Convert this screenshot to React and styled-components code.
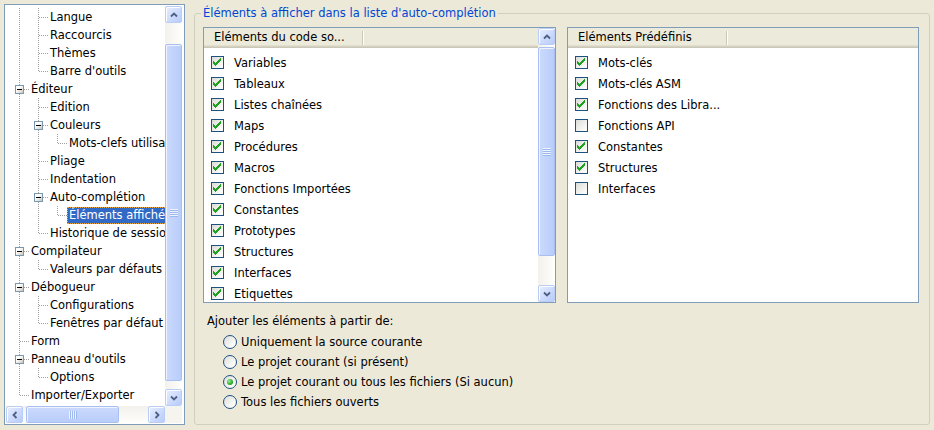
import React from 'react';
import styled, { createGlobalStyle } from 'styled-components';

const FONT = '"DejaVu Sans", "Liberation Sans", sans-serif';
const DOT = '#a0a0a0';

const GlobalStyle = createGlobalStyle`
  html, body {
    margin: 0;
    padding: 0;
    background: #ece9d8;
  }
  body {
    font-family: ${FONT};
    font-size: 11.5px;
    color: #000;
  }
`;

const Window = styled.div`
  display: flex;
  gap: 9px;
  width: 934px;
  height: 430px;
  box-sizing: border-box;
  padding: 4px 5px 0 4px;
`;

/* ---------- scrollbars ---------- */

const VBar = styled.div`
  display: flex;
  flex-direction: column;
  min-height: 0;
  background: linear-gradient(to right, #f3f1ec, #fefefb);
`;

const HBar = styled.div`
  display: flex;
  min-width: 0;
  background: linear-gradient(to bottom, #f3f1ec, #fefefb);
`;

const Corner = styled.div`
  background: #f5f4ef;
`;

const ScrollButton = styled.div`
  flex: 0 0 17px;
  width: 17px;
  height: 17px;
  box-sizing: border-box;
  display: flex;
  align-items: center;
  justify-content: center;
  border: 1px solid #b9cdf7;
  border-radius: 2px;
  background: linear-gradient(135deg, #e7eefd 0%, #ccdafc 55%, #b8ccf9 100%);
  box-shadow: inset 1px 1px 0 #fbfcff;
`;

const Thumb = styled.div`
  flex: 0 0 ${(p) => p.$size}px;
  box-sizing: border-box;
  display: flex;
  align-items: center;
  justify-content: center;
  border: 1px solid #a9bff2;
  border-radius: 2px;
  box-shadow: inset 1px 1px 0 #eef3fe;
  background: linear-gradient(${(p) => (p.$horizontal ? 'to bottom' : 'to right')}, #cbdafd, #b9cdfa);
  ${(p) => (p.$horizontal ? `margin-left: ${p.$offset}px;` : `margin-top: ${p.$offset}px;`)}
`;

const Track = styled.div`
  flex: 1;
`;

const Chevron = ({ dir }) => {
  const pts = {
    up: '1,5.5 4,2.5 7,5.5',
    down: '1,2.5 4,5.5 7,2.5',
    left: '5.5,1 2.5,4 5.5,7',
    right: '2.5,1 5.5,4 2.5,7',
  }[dir];
  return (
    <svg width="8" height="8" viewBox="0 0 8 8">
      <polyline points={pts} fill="none" stroke="#4d6185" strokeWidth="1.8" />
    </svg>
  );
};

const Grip = ({ horizontal }) => (
  <svg width="8" height="8" viewBox="0 0 8 8">
    {[0, 2, 4, 6].map((i) =>
      horizontal ? (
        <g key={i}>
          <rect x={i} y="0" width="1" height="8" fill="#eef3fe" />
          <rect x={i + 1} y="0" width="1" height="8" fill="#9db7ef" />
        </g>
      ) : (
        <g key={i}>
          <rect x="0" y={i} width="8" height="1" fill="#eef3fe" />
          <rect x="0" y={i + 1} width="8" height="1" fill="#9db7ef" />
        </g>
      ),
    )}
  </svg>
);

const VScroll = ({ offset, size }) => (
  <VBar>
    <ScrollButton><Chevron dir="up" /></ScrollButton>
    <Thumb $offset={offset} $size={size}><Grip /></Thumb>
    <Track />
    <ScrollButton><Chevron dir="down" /></ScrollButton>
  </VBar>
);

const HScroll = ({ offset, size }) => (
  <HBar>
    <ScrollButton><Chevron dir="left" /></ScrollButton>
    <Thumb $horizontal $offset={offset} $size={size}><Grip horizontal /></Thumb>
    <Track />
    <ScrollButton><Chevron dir="right" /></ScrollButton>
  </HBar>
);

/* ---------- tree ---------- */

const TreePanel = styled.div`
  flex: 0 0 181px;
  height: 421px;
  box-sizing: border-box;
  border: 1px solid #7f9db9;
  padding: 1px 2px 1px 1px;
  background: #fff;
  display: grid;
  grid-template-columns: minmax(0, 1fr) 17px;
  grid-template-rows: minmax(0, 1fr) 17px;
`;

const TreeView = styled.div`
  overflow: hidden;
  padding: 2px 0 0 4px;
`;

const TreeRow = styled.div`
  display: flex;
  align-items: center;
  height: 18px;
  white-space: nowrap;
`;

const vLine = (h) =>
  `repeating-linear-gradient(${DOT} 0 1px, transparent 1px 2px) 9px 0 / 1px ${h}px no-repeat`;
const hLine = `repeating-linear-gradient(to right, ${DOT} 0 1px, transparent 1px 2px) 10px 9px / 9px 1px no-repeat`;

const Cell = styled.span`
  flex: 0 0 19px;
  height: 18px;
  display: flex;
  align-items: center;
  justify-content: center;
  background: ${(p) => {
    if (p.$kind === 'pass') return vLine(18);
    if (p.$kind === 'tee') return `${hLine}, ${vLine(18)}`;
    if (p.$kind === 'end') return `${hLine}, ${vLine(10)}`;
    return 'none';
  }};
`;

const ExpandBox = styled.span`
  width: 9px;
  height: 9px;
  box-sizing: border-box;
  margin-top: 1px;
  border: 1px solid #7a98af;
  background: linear-gradient(135deg, #fff 35%, #c9c5b5);
  display: flex;
  align-items: center;
  justify-content: center;

  &::after {
    content: '';
    width: 5px;
    height: 1px;
    background: #000;
  }
`;

const NodeLabel = styled.span`
  line-height: 15px;
  padding: 0 1px;
  border: 1px ${(p) => (p.$selected ? 'dotted #e8a848' : 'solid transparent')};
  background: ${(p) => (p.$selected ? '#316ac5' : 'transparent')};
  color: ${(p) => (p.$selected ? '#fff' : '#000')};
`;

const treeRows = [
  ['Langue', 1],
  ['Raccourcis', 1],
  ['Thèmes', 1],
  ["Barre d'outils", 1],
  ['Éditeur', 0, true],
  ['Edition', 1],
  ['Couleurs', 1, true],
  ['Mots-clefs utilisateur', 2],
  ['Pliage', 1],
  ['Indentation', 1],
  ['Auto-complétion', 1, true],
  ['Éléments affichés', 2, false, true],
  ['Historique de session', 1],
  ['Compilateur', 0, true],
  ['Valeurs par défauts', 1],
  ['Débogueur', 0, true],
  ['Configurations', 1],
  ['Fenêtres par défaut', 1],
  ['Form', 0],
  ["Panneau d'outils", 0, true],
  ['Options', 1],
  ['Importer/Exporter', 0],
];

// does a later row sit at `level` before the branch closes?
const continues = (index, level) => {
  for (let j = index + 1; j < treeRows.length; j += 1) {
    if (treeRows[j][1] < level) return false;
    if (treeRows[j][1] === level) return true;
  }
  return false;
};

const Tree = () => (
  <TreeView>
    {treeRows.map(([label, level, expandable, selected], i) => (
      <TreeRow key={label}>
        {Array.from({ length: level }, (_, k) => (
          <Cell key={k} $kind={continues(i, k) ? 'pass' : 'none'} />
        ))}
        <Cell $kind={continues(i, level) ? 'tee' : 'end'}>
          {expandable && <ExpandBox />}
        </Cell>
        <NodeLabel $selected={selected}>{label}</NodeLabel>
      </TreeRow>
    ))}
  </TreeView>
);

/* ---------- group box ---------- */

const Group = styled.fieldset`
  flex: 0 0 736px;
  height: 419px;
  box-sizing: border-box;
  margin: 2px 0 0;
  padding: 7px 10px 0 8px;
  min-width: 0;
  border: 1px solid #d0d0bf;
  border-radius: 3px;
`;

const GroupTitle = styled.legend`
  color: #0046d5;
  line-height: 14px;
  padding: 0 2px;
  margin-left: -2px;
`;

const Lists = styled.div`
  display: grid;
  grid-template-columns: 353px 352px;
  gap: 11px;
  height: 276px;
`;

const ListBox = styled.div`
  display: flex;
  min-height: 0;
  border: 1px solid #7f9db9;
  background: #fff;
  overflow: hidden;
`;

const ListMain = styled.div`
  flex: 1;
  min-width: 0;
  display: flex;
  flex-direction: column;
`;

const Header = styled.div`
  flex: 0 0 20px;
  display: flex;
  background: #ebeadb;
  box-shadow: inset 0 -1px 0 #cbc7b8, inset 0 -2px 0 #d6d2c2, inset 0 -3px 0 #e2decd;
`;

const HeaderCell = styled.div`
  flex: 0 0 160px;
  box-sizing: border-box;
  padding-left: 10px;
  line-height: 19px;
  white-space: nowrap;
  overflow: hidden;
  background:
    linear-gradient(#cbc7b8, #cbc7b8) right 1px top 3px / 1px 14px no-repeat,
    linear-gradient(#fff, #fff) right 0 top 3px / 1px 14px no-repeat;
`;

const ListBody = styled.div`
  flex: 1;
  min-height: 0;
  overflow: hidden;
  padding-top: 4px;
`;

const ItemRow = styled.div`
  display: flex;
  align-items: center;
  gap: 10px;
  height: 21px;
  padding-left: 7px;
  white-space: nowrap;
`;

const CheckBox = styled.span`
  flex: 0 0 13px;
  width: 13px;
  height: 13px;
  box-sizing: border-box;
  border: 1px solid #1c5180;
  background: linear-gradient(135deg, #dcdcd7, #fbfbf9 85%);
`;

// top row of each 3px column of the tick, left to right
const CHECK_COLUMNS = [3, 4, 5, 4, 3, 2, 1, 0];

const CheckMark = () => (
  <svg width="11" height="11" viewBox="0 0 11 11" style={{ display: 'block' }}>
    {CHECK_COLUMNS.map((start, c) => (
      <rect key={c} x={1 + c} y={1 + start} width="1" height="3" fill="#21a121" />
    ))}
  </svg>
);

const CheckItem = ({ label, checked }) => (
  <ItemRow>
    <CheckBox>{checked && <CheckMark />}</CheckBox>
    <span>{label}</span>
  </ItemRow>
);

const codeItems = [
  'Variables',
  'Tableaux',
  'Listes chaînées',
  'Maps',
  'Procédures',
  'Macros',
  'Fonctions Importées',
  'Constantes',
  'Prototypes',
  'Structures',
  'Interfaces',
  'Etiquettes',
];

const predefinedItems = [
  ['Mots-clés', true],
  ['Mots-clés ASM', true],
  ['Fonctions des Libra...', true],
  ['Fonctions API', false],
  ['Constantes', true],
  ['Structures', true],
  ['Interfaces', false],
];

const Options = styled.div`
  padding: 11px 0 0 4px;
`;

const OptionsTitle = styled.div`
  line-height: 14px;
`;

const RadioList = styled.div`
  display: flex;
  flex-direction: column;
  padding: 4px 0 0 16px;
`;

const RadioRow = styled.div`
  display: flex;
  align-items: center;
  gap: 4px;
  height: 20px;
  white-space: nowrap;
`;

const RadioCircle = styled.span`
  flex: 0 0 14px;
  width: 14px;
  height: 14px;
  box-sizing: border-box;
  border: 1px solid #1c5180;
  border-radius: 50%;
  background: linear-gradient(135deg, #dcdcd7, #fdfdfc 80%);
  display: flex;
  align-items: center;
  justify-content: center;

  &::after {
    content: '';
    display: ${(p) => (p.$checked ? 'block' : 'none')};
    width: 6px;
    height: 6px;
    border-radius: 50%;
    background: radial-gradient(circle at 35% 35%, #9cec98, #2fb22b 55%, #1a8c17);
  }
`;

const radios = [
  ['Uniquement la source courante', false],
  ['Le projet courant (si présent)', false],
  ['Le projet courant ou tous les fichiers (Si aucun)', true],
  ['Tous les fichiers ouverts', false],
];

export default function App() {
  return (
    <>
      <GlobalStyle />
      <Window>
        <TreePanel>
          <Tree />
          <VScroll offset={21} size={337} />
          <HScroll offset={3} size={93} />
          <Corner />
        </TreePanel>

        <Group>
          <GroupTitle>Éléments à afficher dans la liste d'auto-complétion</GroupTitle>
          <Lists>
            <ListBox>
              <ListMain>
                <Header>
                  <HeaderCell>Eléments du code so...</HeaderCell>
                </Header>
                <ListBody>
                  {codeItems.map((item) => (
                    <CheckItem key={item} label={item} checked />
                  ))}
                </ListBody>
              </ListMain>
              <VScroll offset={2} size={209} />
            </ListBox>

            <ListBox>
              <ListMain>
                <Header>
                  <HeaderCell>Eléments Prédéfinis</HeaderCell>
                </Header>
                <ListBody>
                  {predefinedItems.map(([item, checked]) => (
                    <CheckItem key={item} label={item} checked={checked} />
                  ))}
                </ListBody>
              </ListMain>
            </ListBox>
          </Lists>

          <Options>
            <OptionsTitle>Ajouter les éléments à partir de:</OptionsTitle>
            <RadioList>
              {radios.map(([label, checked]) => (
                <RadioRow key={label}>
                  <RadioCircle $checked={checked} />
                  <span>{label}</span>
                </RadioRow>
              ))}
            </RadioList>
          </Options>
        </Group>
      </Window>
    </>
  );
}
